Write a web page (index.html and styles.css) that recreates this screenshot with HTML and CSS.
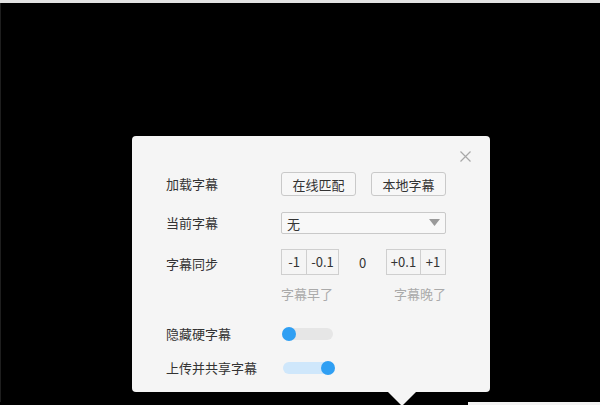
FILE: index.html
```html
<!DOCTYPE html>
<html lang="zh-CN">
<head>
  <meta charset="UTF-8">
  <title>字幕设置</title>
  <link rel="stylesheet" href="styles.css">
</head>
<body>
  <div class="top-strip"></div>
  <div class="stage">
    <div class="subtitle-panel">
      <span class="close">
        <svg width="11" height="11" viewBox="0 0 11 11"><path d="M0.5 0.5 L10.5 10.5 M10.5 0.5 L0.5 10.5" stroke="#a8a8a8" stroke-width="1.2" fill="none"/></svg>
      </span>

      <div class="row row-load">
        <span class="label">加载字幕</span>
        <div class="field">
          <button class="btn">在线匹配</button>
          <button class="btn">本地字幕</button>
        </div>
      </div>

      <div class="row row-current">
        <span class="label">当前字幕</span>
        <div class="field">
          <div class="select">
            <span>无</span>
            <svg width="11" height="8" viewBox="0 0 11 8"><path d="M0 0 L11 0 L5.5 7 Z" fill="#9a9a9a"/></svg>
          </div>
        </div>
      </div>

      <div class="row row-sync">
        <span class="label">字幕同步</span>
        <div class="field sync">
          <div class="step-group">
            <span class="step w26">-1</span>
            <span class="step w32">-0.1</span>
          </div>
          <span class="offset">0</span>
          <div class="step-group">
            <span class="step w34">+0.1</span>
            <span class="step w26">+1</span>
          </div>
        </div>
      </div>

      <div class="hints">
        <span>字幕早了</span>
        <span>字幕晚了</span>
      </div>

      <div class="row row-hide">
        <span class="label">隐藏硬字幕</span>
        <div class="field">
          <span class="switch"><span class="knob"></span></span>
        </div>
      </div>

      <div class="row row-share">
        <span class="label">上传并共享字幕</span>
        <div class="field">
          <span class="switch on"><span class="knob"></span></span>
        </div>
      </div>
    </div>
  </div>
  <div class="bottom-strip"></div>
</body>
</html>
```

FILE: styles.css
```css
body {
  margin: 0;
  width: 600px;
  height: 405px;
  overflow: hidden;
  background: #000;
  font-family: "Noto Sans CJK SC", "Noto Sans", sans-serif;
  font-size: 13px;
  color: #333;
}

.top-strip {
  height: 3px;
  background: #e2e2e2;
}

.stage {
  position: relative;
  height: 399px;
  background: #000;
  border-left: 1px solid #1e1e1e;
}

.bottom-strip {
  height: 3px;
  margin-left: 468px;
  background: #f2f2f2;
}

.subtitle-panel {
  position: absolute;
  left: 131px;
  top: 133px;
  width: 358px;
  height: 256px;
  box-sizing: border-box;
  padding: 36px 0 0 34px;
  background: #f5f5f5;
  border-radius: 4px;
}

.subtitle-panel::after {
  content: "";
  position: absolute;
  left: 256px;
  top: 256px;
  border-left: 14px solid transparent;
  border-right: 14px solid transparent;
  border-top: 14px solid #f5f5f5;
}

.close {
  position: absolute;
  right: 19px;
  top: 15px;
  width: 11px;
  height: 11px;
  display: flex;
}

.row {
  display: flex;
  align-items: center;
}

.label {
  width: 115px;
  flex-shrink: 0;
  line-height: 16px;
}

.field {
  display: flex;
  align-items: center;
}

.row-load { height: 24px; }
.row-current { height: 22px; margin-top: 16px; }
.row-sync { height: 26px; margin-top: 15px; }
.row-sync .label { padding-top: 4px; }
.row-hide { height: 20px; margin-top: 22px; }
.row-share { height: 20px; margin-top: 14px; }

.btn {
  width: 75px;
  height: 24px;
  margin: 0 15px 0 0;
  padding: 0;
  font-family: inherit;
  font-size: 13px;
  color: #333;
  background: #f7f7f7;
  border: 1px solid #c9c9c9;
  border-radius: 3px;
}

.select {
  width: 165px;
  height: 22px;
  box-sizing: border-box;
  padding: 0 5px 0 5px;
  display: flex;
  align-items: center;
  justify-content: space-between;
  background: #f8f8f8;
  border: 1px solid #c9c9c9;
  border-radius: 2px;
}

.step-group {
  display: flex;
  border: 1px solid #cfcfcf;
}

.step {
  height: 24px;
  line-height: 24px;
  text-align: center;
}

.step + .step {
  border-left: 1px solid #cfcfcf;
}

.w26 { width: 24px; }
.w32 { width: 31px; }
.w34 { width: 33px; }

.offset {
  width: 47px;
  text-align: center;
}

.hints {
  display: flex;
  margin: 11px 0 0 115px;
  width: 165px;
  justify-content: space-between;
  color: #aaa;
  line-height: 16px;
}

.switch {
  position: relative;
  width: 51px;
  height: 12px;
  border-radius: 6px;
  background: #e6e6e6;
  margin-left: 1px;
}

.switch.on {
  background: #cfe7fb;
  margin-left: 2px;
  width: 50px;
}

.knob {
  position: absolute;
  left: 0;
  top: -1px;
  width: 14px;
  height: 14px;
  border-radius: 50%;
  background: #2f9ff3;
}

.switch.on .knob {
  left: auto;
  right: -2px;
}
```
